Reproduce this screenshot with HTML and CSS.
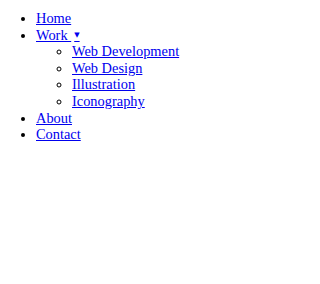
FILE: index.html
```html
<!DOCTYPE html>
<html>
<head>
<meta charset="utf-8">
<link rel="stylesheet" href="styles.css">
</head>
<body>
<ul class="menu">
  <li><a href="#">Home</a></li>
  <li><a href="#">Work <span class="caret">▼</span></a>
    <ul class="submenu">
      <li><a href="#">Web Development</a></li>
      <li><a href="#">Web Design</a></li>
      <li><a href="#">Illustration</a></li>
      <li><a href="#">Iconography</a></li>
    </ul>
  </li>
  <li><a href="#">About</a></li>
  <li><a href="#">Contact</a></li>
</ul>
</body>
</html>
```
FILE: styles.css
```css
body {
  margin: 0;
  font-family: "Liberation Serif", "Times New Roman", serif;
  font-size: 14.4px;
  line-height: 16.6px;
  background: #fff;
}
.menu {
  margin: 10px 0;
  padding-left: 36px;
  list-style: disc;
}
.submenu {
  margin: 0;
  padding-left: 36px;
  list-style: circle;
}
a {
  color: #0000ee;
}
.caret {
  font-family: "DejaVu Sans", sans-serif;
  font-size: 7px;
  vertical-align: 3px;
  padding: 0 6px 0 3px;
}
```
